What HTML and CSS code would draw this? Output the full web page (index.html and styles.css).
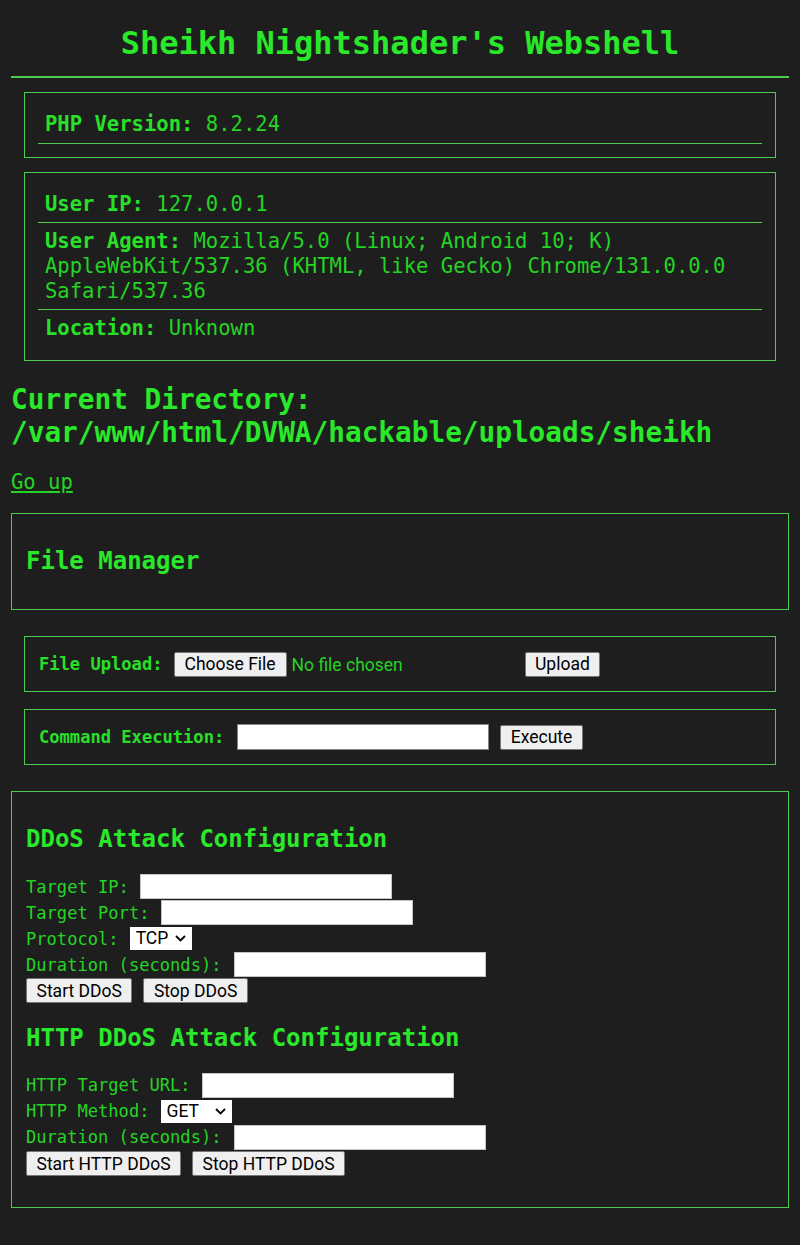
FILE: index.html
```html
<!DOCTYPE html>
<html lang="en">
<head>
<meta charset="utf-8">
<title>Sheikh Nightshader's Webshell</title>
<link rel="stylesheet" href="styles.css">
</head>
<body>
<h1 class="title">Sheikh Nightshader's Webshell</h1>

<div class="info">
  <p class="info-row"><strong>PHP Version:</strong> 8.2.24</p>
</div>

<div class="info">
  <p class="info-row"><strong>User IP:</strong> 127.0.0.1</p>
  <p class="info-row"><strong>User Agent:</strong> Mozilla/5.0 (Linux; Android 10; K) AppleWebKit/537.36 (KHTML, like Gecko) Chrome/131.0.0.0 Safari/537.36</p>
  <p class="info-row last"><strong>Location:</strong> Unknown</p>
</div>

<h2 class="cwd">Current Directory: /var/www/html/DVWA/hackable/uploads/sheikh</h2>

<p class="nav"><a href="#" class="up">Go up</a></p>

<div class="panel manager">
  <h2 class="panel-title">File Manager</h2>
</div>

<form class="tool upload">
  <label class="tool-label">File Upload:</label>
  <input type="file" class="file">
  <button type="button" class="btn">Upload</button>
</form>

<form class="tool cmd">
  <label class="tool-label">Command Execution:</label>
  <input type="text" class="field field-cmd">
  <button type="button" class="btn">Execute</button>
</form>

<div class="panel ddos">
  <h2 class="panel-title">DDoS Attack Configuration</h2>
  <form class="attack">
    <div class="row"><label>Target IP:</label><input type="text" class="field"></div>
    <div class="row"><label>Target Port:</label><input type="text" class="field"></div>
    <div class="row"><label>Protocol:</label>
      <span class="select-wrap">
        <select class="picker picker-proto"><option>TCP</option><option>UDP</option></select>
        <svg class="chev" width="11" height="7" viewBox="0 0 11 7"><path d="M1 1 L5.5 5.5 L10 1" fill="none" stroke="#000" stroke-width="1.8"/></svg>
      </span>
    </div>
    <div class="row"><label class="dur">Duration (seconds):</label><input type="text" class="field"></div>
    <div class="row btns"><button type="button" class="btn">Start DDoS</button><button type="button" class="btn">Stop DDoS</button></div>
  </form>

  <h2 class="panel-title">HTTP DDoS Attack Configuration</h2>
  <form class="attack last-form">
    <div class="row"><label>HTTP Target URL:</label><input type="text" class="field"></div>
    <div class="row"><label>HTTP Method:</label>
      <span class="select-wrap">
        <select class="picker picker-method"><option>GET</option><option>POST</option></select>
        <svg class="chev" width="11" height="7" viewBox="0 0 11 7"><path d="M1 1 L5.5 5.5 L10 1" fill="none" stroke="#000" stroke-width="1.8"/></svg>
      </span>
    </div>
    <div class="row"><label class="dur">Duration (seconds):</label><input type="text" class="field"></div>
    <div class="row btns"><button type="button" class="btn">Start HTTP DDoS</button><button type="button" class="btn">Stop HTTP DDoS</button></div>
  </form>
</div>
</body>
</html>
```

FILE: styles.css
```css
html {
  background: #1e1e1e;
}

body {
  margin: 0;
  padding: 0 11px 37px;
  background: #1e1e1e;
  color: #24d424;
  font-family: "DejaVu Sans Mono", monospace;
  font-size: 20.56px;
  line-height: 1.2;
}

.title {
  margin: 0;
  padding: 24px 0 14px;
  font-size: 32px;
  line-height: 38px;
  font-weight: bold;
  text-align: center;
  color: #2ae82a;
  border-bottom: 2px solid #4ccb4c;
}

.info {
  margin: 14px 13px 0;
  padding: 13px;
  border: 1px solid #4ccb4c;
}

.info-row {
  margin: 0;
  padding: 6px 7px;
  border-bottom: 1px solid #4ccb4c;
}

.info-row.last {
  border-bottom: none;
}

.info-row strong {
  color: #28e028;
}

.cwd {
  margin: 22px 0 20px;
  font-size: 27.74px;
  line-height: 1.2;
  font-weight: bold;
  color: #2ae82a;
}

.nav {
  margin: 0 0 19px;
}

.up {
  color: #24d424;
  text-decoration: underline;
}

.panel {
  padding: 13px 14px;
  border: 1px solid #4ccb4c;
}

.panel-title {
  margin: 20px 0;
  font-size: 24px;
  line-height: 1.2;
  font-weight: bold;
  color: #2ae82a;
}

.tool {
  display: flex;
  align-items: center;
  gap: 11px;
  margin: 0 13px;
  padding: 14px;
  min-height: 26px;
  border: 1px solid #4ccb4c;
  font-size: 17.1px;
}

.upload {
  margin-top: 26px;
}

.cmd {
  margin-top: 17px;
}

.tool-label {
  font-weight: bold;
  color: #28e028;
}

.cmd .tool-label {
  margin-right: 2px;
}

.file {
  width: 340px;
  height: 25px;
  padding: 0;
  font-family: Roboto, "Liberation Sans", sans-serif;
  font-size: 17.5px;
  color: #24d424;
}

.file::file-selector-button {
  height: 25px;
  margin: 0 5px 0 0;
  padding: 0 10px;
  font-family: Roboto, "Liberation Sans", sans-serif;
  font-size: 17.5px;
  color: #000;
  background: #efefef;
  border: 1px solid #767676;
  border-radius: 2px;
}

.btn {
  box-sizing: border-box;
  height: 25px;
  margin: 0;
  padding: 0 9.5px;
  font-family: Roboto, "Liberation Sans", sans-serif;
  font-size: 17.5px;
  color: #000;
  background: #efefef;
  border: 1px solid #767676;
  border-radius: 2px;
}

.field {
  box-sizing: border-box;
  width: 252px;
  height: 25px;
  margin: 0;
  padding: 0 3px;
  background: #fff;
  border: 1px solid #c4c4c4;
  font-family: Roboto, "Liberation Sans", sans-serif;
  font-size: 17.1px;
}

.field-cmd {
  height: 26px;
  border: 1px solid #858585;
}

.ddos {
  margin-top: 26px;
}

.attack {
  display: flex;
  flex-direction: column;
  font-size: 17.1px;
}

.last-form {
  margin-bottom: 17px;
}

.row {
  display: flex;
  align-items: center;
  gap: 11px;
  height: 26px;
}

.dur {
  margin-right: 1.5px;
}

.select-wrap {
  position: relative;
  display: inline-block;
  height: 23px;
}

.picker {
  -webkit-appearance: none;
  appearance: none;
  box-sizing: border-box;
  height: 23px;
  margin: 0;
  padding: 0 0 0 6px;
  background: #fff;
  border: none;
  border-radius: 0;
  color: #000;
  font-family: Roboto, "Liberation Sans", sans-serif;
  font-size: 17.5px;
  line-height: 23px;
}

.picker-proto {
  width: 62px;
}

.picker-method {
  width: 71px;
}

.chev {
  position: absolute;
  right: 6px;
  top: 8px;
  pointer-events: none;
}
```
